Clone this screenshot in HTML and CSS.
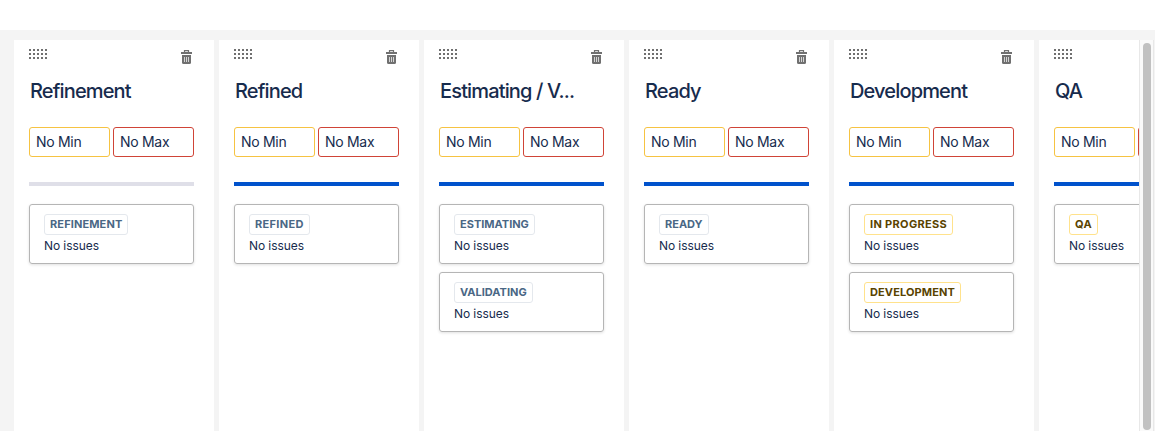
FILE: index.html
```html
<!DOCTYPE html>
<html lang="en">
<head>
<meta charset="utf-8">
<title>Board columns</title>
<link rel="stylesheet" href="styles.css">
</head>
<body>
<svg class="defs" width="0" height="0" aria-hidden="true">
  <symbol id="trash" viewBox="0 0 11 14">
    <path d="M0 2h11v2H0z" fill="#707070"/>
    <path d="M3.500 2V.6h4V2" fill="none" stroke="#707070" stroke-width="1.2"/>
    <path d="M1 5h9v7.500Q10 14 8.500 14h-6Q1 14 1 12.500z" fill="#707070"/>
    <path d="M3.500 7v5M5.500 7v5M7.500 7v5" stroke="#d4d4d4" stroke-width="1"/>
  </symbol>
  <symbol id="grip" viewBox="0 0 18 10">
    <path d="M0 1h18M0 5h18M0 9h18" stroke="#707070" stroke-width="2" stroke-dasharray="2 2"/>
  </symbol>
</svg>
<div class="board">
  <main class="columns">
    <section class="column">
      <div class="tools"><svg class="grip"><use href="#grip"/></svg><svg class="trash"><use href="#trash"/></svg></div>
      <h2 class="title">Refinement</h2>
      <div class="limits"><div class="limit min">No Min</div><div class="limit max">No Max</div></div>
      <div class="bar todo"></div>
      <div class="card"><span class="status loose">REFINEMENT</span><p class="count">No issues</p></div>
    </section>
    <section class="column">
      <div class="tools"><svg class="grip"><use href="#grip"/></svg><svg class="trash"><use href="#trash"/></svg></div>
      <h2 class="title">Refined</h2>
      <div class="limits"><div class="limit min">No Min</div><div class="limit max">No Max</div></div>
      <div class="bar"></div>
      <div class="card"><span class="status looser">REFINED</span><p class="count">No issues</p></div>
    </section>
    <section class="column">
      <div class="tools"><svg class="grip"><use href="#grip"/></svg><svg class="trash"><use href="#trash"/></svg></div>
      <h2 class="title">Estimating / V...</h2>
      <div class="limits"><div class="limit min">No Min</div><div class="limit max">No Max</div></div>
      <div class="bar"></div>
      <div class="card"><span class="status">ESTIMATING</span><p class="count">No issues</p></div>
      <div class="card"><span class="status">VALIDATING</span><p class="count">No issues</p></div>
    </section>
    <section class="column">
      <div class="tools"><svg class="grip"><use href="#grip"/></svg><svg class="trash"><use href="#trash"/></svg></div>
      <h2 class="title">Ready</h2>
      <div class="limits"><div class="limit min">No Min</div><div class="limit max">No Max</div></div>
      <div class="bar"></div>
      <div class="card"><span class="status">READY</span><p class="count">No issues</p></div>
    </section>
    <section class="column">
      <div class="tools"><svg class="grip"><use href="#grip"/></svg><svg class="trash"><use href="#trash"/></svg></div>
      <h2 class="title">Development</h2>
      <div class="limits"><div class="limit min">No Min</div><div class="limit max">No Max</div></div>
      <div class="bar"></div>
      <div class="card"><span class="status active looser">IN PROGRESS</span><p class="count">No issues</p></div>
      <div class="card"><span class="status active loose">DEVELOPMENT</span><p class="count">No issues</p></div>
    </section>
    <section class="column">
      <div class="tools"><svg class="grip"><use href="#grip"/></svg></div>
      <h2 class="title">QA</h2>
      <div class="limits"><div class="limit min">No Min</div><div class="limit max"></div></div>
      <div class="bar"></div>
      <div class="card"><span class="status active looser">QA</span><p class="count">No issues</p></div>
    </section>
  </main>
  <div class="scrollbar"><div class="thumb"></div></div>
</div>
</body>
</html>
```

FILE: styles.css
```css
* { box-sizing: border-box; }
body {
  margin: 0;
  height: 431px;
  padding-top: 30px;
  overflow: hidden;
  background: #fff;
  color: #172b4d;
  font-family: Inter, "Liberation Sans", sans-serif;
}
.defs { position: absolute; }
.board {
  display: flex;
  height: 401px;
  padding: 10px 1px 0 14px;
  background: #f4f4f4;
}
.columns {
  display: flex;
  gap: 5px;
  width: 1125px;
  flex: none;
  overflow: hidden;
}
.column {
  flex: none;
  width: 200px;
  padding: 9px 20px 0 15px;
  background: #fff;
}
.tools { display: flex; justify-content: space-between; height: 28px; }
.grip { width: 18px; height: 10px; }
.trash { width: 11px; height: 14px; margin: 1px 2px 0 0; }
.title {
  margin: 0 0 0 1px;
  height: 28px;
  line-height: 28px;
  font-size: 20px;
  font-weight: 550;
  letter-spacing: -0.85px;
  white-space: nowrap;
}
.limits { display: flex; gap: 3px; margin-top: 22px; }
.limit {
  width: 81px;
  height: 30px;
  flex: none;
  padding-left: 6px;
  border: 1px solid #f6c342;
  border-radius: 3px;
  font-size: 14px;
  line-height: 28px;
  letter-spacing: -0.3px;
  white-space: nowrap;
}
.limit.max { border-color: #d04437; }
.bar { height: 4px; margin: 25px 0 18px; background: #0052cc; }
.bar.todo { background: #dfdfe8; }
.card {
  height: 60px;
  margin-bottom: 8px;
  padding: 9px 14px 0;
  border: 1px solid #b5b5b5;
  border-radius: 3px;
  box-shadow: 0 1px 3px rgba(0, 0, 0, 0.12);
}
.status {
  display: block;
  width: fit-content;
  height: 21px;
  padding: 0 5px;
  border: 1px solid #e4e8ed;
  border-radius: 3px;
  color: #4a6785;
  font-size: 11px;
  font-weight: 700;
  line-height: 19px;
  white-space: nowrap;
}
.status.loose { letter-spacing: 0.12px; }
.status.looser { letter-spacing: 0.33px; }
.status.active { border-color: #ffe28c; color: #594300; }
.count { margin: 2px 0 0; font-size: 12px; line-height: 18px; letter-spacing: -0.08px; }
.scrollbar {
  flex: none;
  width: 15px;
  padding: 3px 3px 1px;
  border: solid #e8e8e8;
  border-width: 0 1px;
  background: #fafafa;
}
.thumb { width: 8px; height: 100%; border-radius: 4px; background: #c1c1c1; }
```
